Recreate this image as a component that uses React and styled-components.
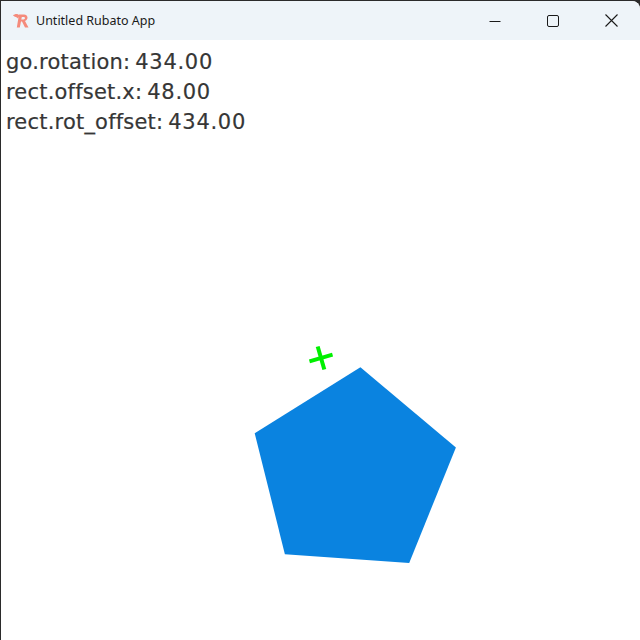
import React from 'react';
import styled, { createGlobalStyle } from 'styled-components';

const GlobalStyle = createGlobalStyle`
    html, body {
        margin: 0;
        padding: 0;
        background: #2b2b2b;
    }
`

const readouts = [
    { label: 'go.rotation:', value: '434.00' },
    { label: 'rect.offset.x:', value: '48.00' },
    { label: 'rect.rot_offset:', value: '434.00' },
];

// regular pentagon, centre (352, 433) in stage coords, r = 106
const center = { x: 352, y: 433 };
const radius = 106;
const pentagon = [0, 1, 2, 3, 4]
    .map((i) => {
        const a = ((-86 + i * 72) * Math.PI) / 180;
        return `${(center.x + radius * Math.cos(a)).toFixed(1)},${(center.y + radius * Math.sin(a)).toFixed(1)}`;
    })
    .join(' ');

const RubatoLogo = () => (
    <svg width="20" height="18" viewBox="0 0 20 18">
        <g fill="#f58b7c">
            <path d="M2 3.5 C4 1.5 7 1.5 8.5 3.5 L7 6.5 C5.5 5 4 5 2 3.5 Z" />
            <path d="M8 2.5 L13 2.5 C17 2.5 18 7.5 14 9 L17.5 15.5 L14 15.5 L11 9.5 L10 9.5 L8.8 15.5 L5.8 15.5 Z" />
        </g>
        <path d="M10.8 5 L12.8 5 C14.4 5 14.4 7.4 12.6 7.4 L10.3 7.4 Z" fill="#eef4f9" />
    </svg>
);

const App = () => {
    return (
        <>
            <GlobalStyle />
            <Window>
                <TitleBar>
                    <TitleLeft>
                        <RubatoLogo />
                        <Title>Untitled Rubato App</Title>
                    </TitleLeft>
                    <Controls>
                        <ControlButton aria-label="Minimize">
                            <svg width="12" height="12" viewBox="0 0 12 12">
                                <path d="M0.5 6.5 H11.5" stroke="#1a1a1a" strokeWidth="1" />
                            </svg>
                        </ControlButton>
                        <ControlButton aria-label="Maximize">
                            <svg width="12" height="12" viewBox="0 0 12 12">
                                <rect x="0.5" y="0.5" width="11" height="11" rx="1.5" fill="none" stroke="#1a1a1a" strokeWidth="1" />
                            </svg>
                        </ControlButton>
                        <ControlButton aria-label="Close">
                            <svg width="13" height="13" viewBox="0 0 13 13">
                                <path d="M0.5 0.5 L12.5 12.5 M12.5 0.5 L0.5 12.5" stroke="#1a1a1a" strokeWidth="1.1" />
                            </svg>
                        </ControlButton>
                    </Controls>
                </TitleBar>
                <Stage>
                    <Scene viewBox="0 0 639 600" width="639" height="600">
                        <polygon points={pentagon} fill="#0a83e0" />
                        <g transform="translate(320 318) rotate(-16)" stroke="#00f000" strokeWidth="4" strokeLinecap="butt">
                            <line x1="-12" y1="0" x2="12" y2="0" />
                            <line x1="0" y1="-12" x2="0" y2="12" />
                        </g>
                    </Scene>
                    <Readouts>
                        {readouts.map((r) => (
                            <Readout key={r.label}>
                                <Label>{r.label}</Label>
                                <span>{r.value}</span>
                            </Readout>
                        ))}
                    </Readouts>
                </Stage>
            </Window>
        </>
    );
};

const Window = styled.div`
    display: flex;
    flex-direction: column;
    width: 639px;
    height: 639px;
    margin-left: 1px;
    margin-top: 1px;
    background: #ffffff;
    border-top-right-radius: 8px;
    overflow: hidden;
`

const TitleBar = styled.header`
    display: flex;
    align-items: center;
    justify-content: space-between;
    height: 39px;
    flex-shrink: 0;
    background: #eef4f9;
`

const TitleLeft = styled.div`
    display: flex;
    align-items: center;
    gap: 5px;
    padding-left: 10px;
`

const Title = styled.span`
    font-family: 'Noto Sans', 'Open Sans', sans-serif;
    font-size: 12.5px;
    color: #1a1a1a;
`

const Controls = styled.div`
    display: flex;
    height: 100%;
`

const ControlButton = styled.div`
    display: flex;
    align-items: center;
    justify-content: center;
    width: 58px;
    height: 100%;
`

const Stage = styled.main`
    position: relative;
    flex: 1;
`

const Scene = styled.svg`
    position: absolute;
    left: 0;
    top: 0;
`

const Readouts = styled.div`
    position: relative;
    display: flex;
    flex-direction: column;
    padding: 7px 0 0 5px;
`

const Readout = styled.div`
    display: flex;
    gap: 5px;
    height: 30px;
    align-items: center;
    font-family: 'DejaVu Sans', Roboto, sans-serif;
    font-size: 21px;
    color: #363636;
    letter-spacing: 0.7px;
    -webkit-text-stroke: 0.2px #363636;
`

const Label = styled.span`
    letter-spacing: 0.2px;
`

export default App;
